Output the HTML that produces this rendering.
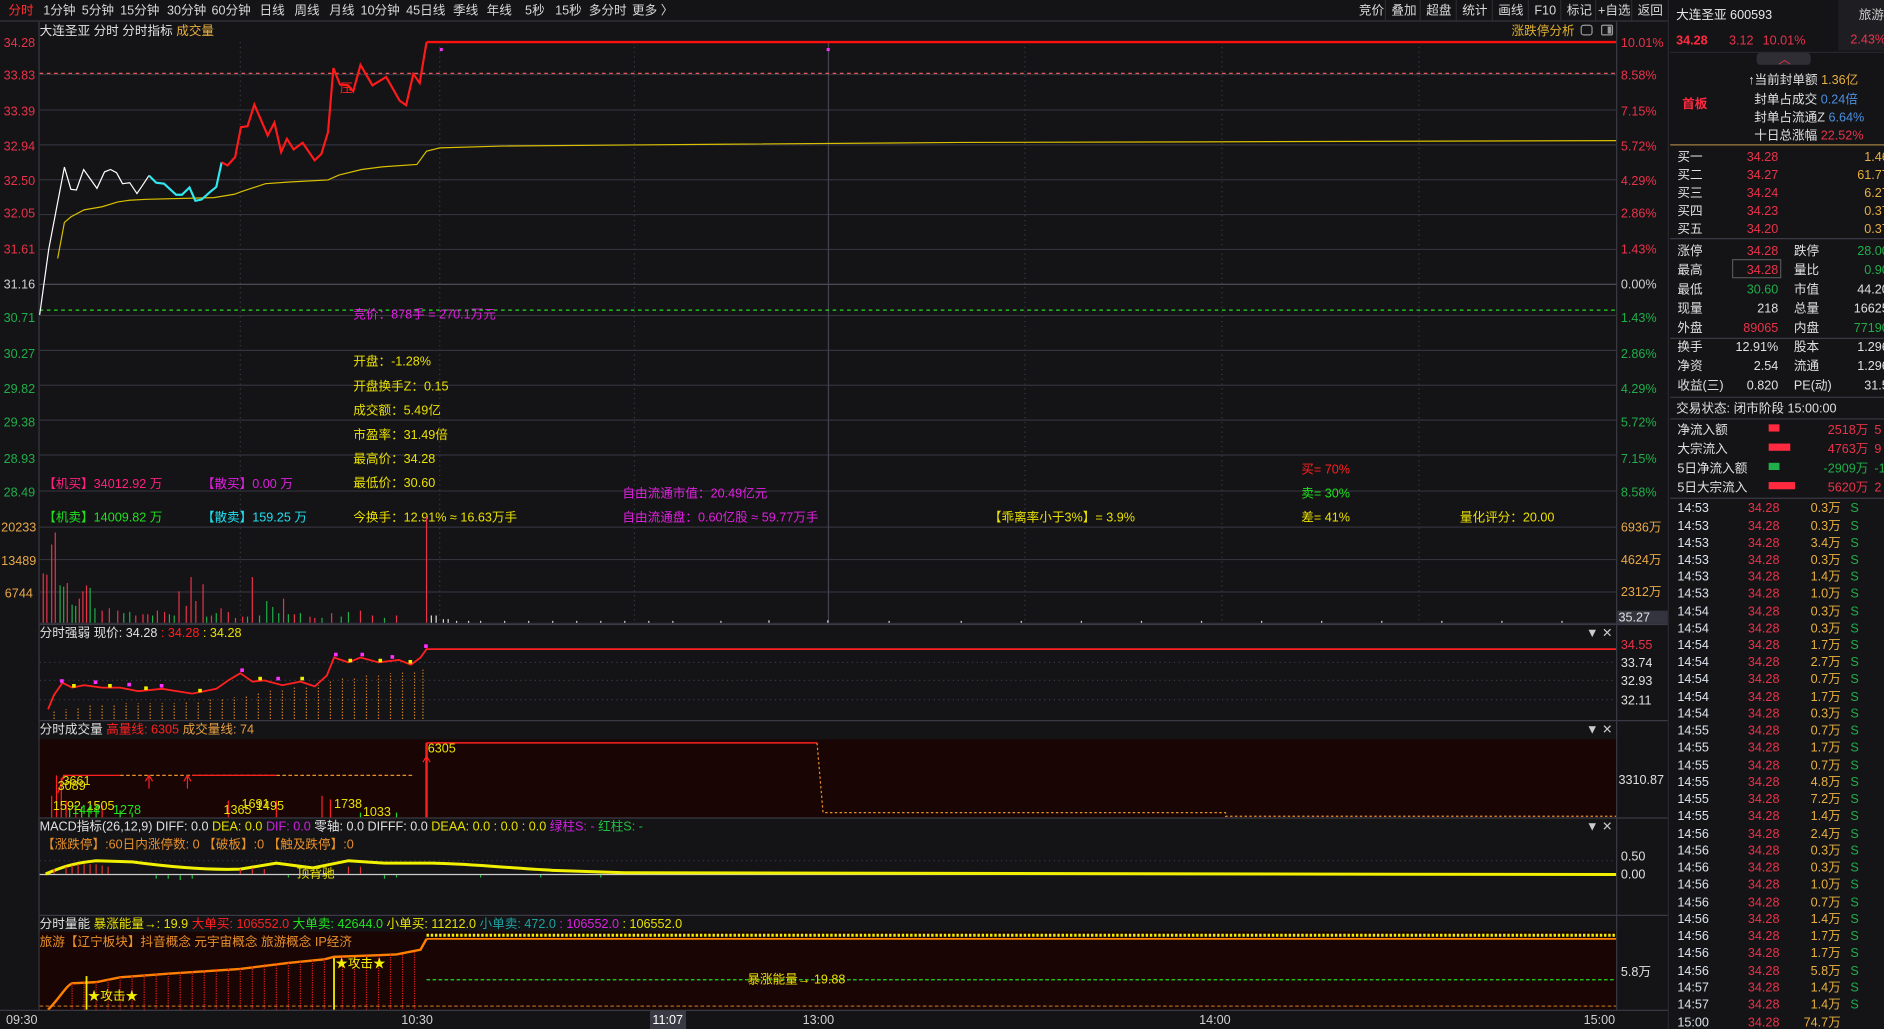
<!DOCTYPE html>
<html><head><meta charset="utf-8"><style>
html,body{margin:0;padding:0;background:#141316;overflow:hidden}
svg{display:block}
text{font-family:"Liberation Sans","Noto Sans CJK SC",sans-serif;font-size:10.5px}
</style></head><body>
<svg width="1884" height="1029" viewBox="0 0 1568 856" preserveAspectRatio="none" xmlns="http://www.w3.org/2000/svg">
<rect width="1568" height="856" fill="#141316"/>
<!-- toolbar -->
<line x1="0" y1="17.5" x2="1388" y2="17.5" stroke="#34343c"/>
<g fill="#d8d8d8">
<text x="7" y="12" fill="#ff3030">分时</text><text x="36" y="12">1分钟</text><text x="68" y="12">5分钟</text><text x="100" y="12">15分钟</text><text x="139" y="12">30分钟</text><text x="176" y="12">60分钟</text><text x="216" y="12">日线</text><text x="245" y="12">周线</text><text x="274" y="12">月线</text><text x="300" y="12">10分钟</text><text x="338" y="12">45日线</text><text x="377" y="12">季线</text><text x="405" y="12">年线</text><text x="437" y="12">5秒</text><text x="462" y="12">15秒</text><text x="490" y="12">多分时</text><text x="526" y="12">更多 〉</text>
<text x="1131" y="12">竞价</text><text x="1158" y="12">叠加</text><text x="1187" y="12">超盘</text><text x="1217" y="12">统计</text><text x="1247" y="12">画线</text><text x="1277" y="12">F10</text><text x="1304" y="12">标记</text><text x="1330" y="12">+自选</text><text x="1363" y="12">返回</text>
</g>
<g stroke="#2a2a30"><line x1="1153" y1="0" x2="1153" y2="17"/><line x1="1182" y1="0" x2="1182" y2="17"/><line x1="1212" y1="0" x2="1212" y2="17"/><line x1="1242" y1="0" x2="1242" y2="17"/><line x1="1272" y1="0" x2="1272" y2="17"/><line x1="1299" y1="0" x2="1299" y2="17"/><line x1="1328" y1="0" x2="1328" y2="17"/><line x1="1358" y1="0" x2="1358" y2="17"/></g>
<!-- chart frame -->
<line x1="32.5" y1="18" x2="32.5" y2="840" stroke="#3a3a44"/>
<line x1="1345.5" y1="18" x2="1345.5" y2="840" stroke="#3a3a44"/>
<line x1="1388.5" y1="0" x2="1388.5" y2="856" stroke="#2a2a30"/>
<text x="33" y="29" fill="#e0e0e0">大连圣亚  分时 分时指标 <tspan fill="#e8b040">成交量</tspan></text>
<text x="1258" y="29" fill="#e0b030">涨跌停分析</text>
<rect x="1316" y="21" width="9" height="8" rx="2" fill="none" stroke="#999"/><rect x="1333" y="21" width="9" height="8" rx="1" fill="none" stroke="#999"/><rect x="1338" y="22" width="3" height="6" fill="#999"/>
<!-- grid -->
<g stroke="#33333c" stroke-width="1">
<line x1="33" y1="62" x2="1345" y2="62"/><line x1="33" y1="91.5" x2="1345" y2="91.5"/><line x1="33" y1="120.5" x2="1345" y2="120.5"/><line x1="33" y1="149.5" x2="1345" y2="149.5"/><line x1="33" y1="178.5" x2="1345" y2="178.5"/><line x1="33" y1="207.5" x2="1345" y2="207.5"/><line x1="33" y1="236.5" x2="1345" y2="236.5" stroke="#55555e"/><line x1="33" y1="262.5" x2="1345" y2="262.5"/><line x1="33" y1="291.5" x2="1345" y2="291.5"/><line x1="33" y1="320.5" x2="1345" y2="320.5"/><line x1="33" y1="349.5" x2="1345" y2="349.5"/><line x1="33" y1="378.5" x2="1345" y2="378.5"/><line x1="33" y1="408.5" x2="1345" y2="408.5"/><line x1="33" y1="438.5" x2="1345" y2="438.5"/><line x1="33" y1="465.5" x2="1345" y2="465.5"/><line x1="33" y1="492.5" x2="1345" y2="492.5"/><line x1="33" y1="518.5" x2="1345" y2="518.5"/>
</g>
<g stroke="#3a3a44" stroke-dasharray="1,3"><line x1="200" y1="35" x2="200" y2="518"/><line x1="366" y1="35" x2="366" y2="518"/><line x1="528" y1="35" x2="528" y2="518"/><line x1="853" y1="35" x2="853" y2="518"/><line x1="1017" y1="35" x2="1017" y2="518"/><line x1="1181" y1="35" x2="1181" y2="518"/></g>
<line x1="689.5" y1="35" x2="689.5" y2="518" stroke="#444450"/>
<line x1="33" y1="61" x2="1345" y2="61" stroke="#ff6060" stroke-dasharray="3,3"/>
<line x1="33" y1="258" x2="1345" y2="258" stroke="#20e020" stroke-dasharray="3,3"/>
<!-- left labels -->
<g fill="#e8334a" font-size="10"><text x="3" y="39">34.28</text><text x="3" y="66">33.83</text><text x="3" y="96">33.39</text><text x="3" y="125">32.94</text><text x="3" y="154">32.50</text><text x="3" y="181">32.05</text><text x="3" y="211">31.61</text></g>
<text x="3" y="240" fill="#d0d0d0">31.16</text>
<g fill="#1fae4a"><text x="3" y="268">30.71</text><text x="3" y="298">30.27</text><text x="3" y="327">29.82</text><text x="3" y="355">29.38</text><text x="3" y="385">28.93</text><text x="3" y="413">28.49</text></g>
<g fill="#e8a848"><text x="1" y="442">20233</text><text x="1" y="470">13489</text><text x="4" y="497">6744</text></g>
<!-- right labels -->
<g fill="#e8334a"><text x="1349" y="39">10.01%</text><text x="1349" y="66">8.58%</text><text x="1349" y="96">7.15%</text><text x="1349" y="125">5.72%</text><text x="1349" y="154">4.29%</text><text x="1349" y="181">2.86%</text><text x="1349" y="211">1.43%</text></g>
<text x="1349" y="240" fill="#d0d0d0">0.00%</text>
<g fill="#1fae4a"><text x="1349" y="268">1.43%</text><text x="1349" y="298">2.86%</text><text x="1349" y="327">4.29%</text><text x="1349" y="355">5.72%</text><text x="1349" y="385">7.15%</text><text x="1349" y="413">8.58%</text></g>
<g fill="#e8a848"><text x="1349" y="442">6936万</text><text x="1349" y="469">4624万</text><text x="1349" y="496">2312万</text></g>
<rect x="1346" y="508" width="42" height="11" fill="#34343e"/><text x="1347" y="517" fill="#e0e0e0">35.27</text>
<!-- avg line -->
<polyline fill="none" stroke="#d8c000" stroke-width="1" points="48,215 53.6,185 59,180.4 70,174.6 85,172 98,168 107.5,166.6 122,165.8 178,164.4 195,161.6 202,159 221,152.8 241,151.4 273,149.7 282,145.6 301,141 319,138.7 347,136.8 355,125.7 366,123 418,121.5 600,120 800,118.5 1000,118 1345,117"/>
<!-- price line -->
<polyline fill="none" stroke="#ffffff" stroke-width="1" points="33,262 40.6,207 53.6,139 59,157.5 63.6,158 69.6,141 80.7,156.7 87,143 92,141 97,143.7 102,152.8 108,152 114,161 119.4,153 124,146"/>
<polyline fill="none" stroke="#30e8f0" stroke-width="1.8" points="124,146 130,152 136.5,152.8 146.6,162 151.4,162 157.7,156 162.6,167 167.8,166 174.5,160 180,155.5 184.5,135"/>
<polyline fill="none" stroke="#ff1a1a" stroke-width="1.8" points="184.5,135 189.4,137.6 195.7,130.7 200.5,105.8 206,105 211.7,87 222.8,112.7 228.4,102 234,126.5 238.8,115.5 244.4,124.3 251.9,118.8 261.9,133.4 267.5,128 273,110 277.5,56.6 283,70.4 289.8,71 294,76 300,54 310,71 321.4,64 332.6,83.7 338,87.5 344,61.5 349.3,69 355,35"/>
<line x1="355" y1="35" x2="1345" y2="35" stroke="#ff1010" stroke-width="2"/>
<text x="283" y="77" fill="#ff2020" font-size="9">压</text>
<rect x="366" y="40" width="2.5" height="2.5" fill="#ff30ff"/><rect x="688" y="40" width="2.5" height="2.5" fill="#ff30ff"/>
<!-- annotations -->
<text x="294" y="265" fill="#e020e0">竞价：878手 = 270.1万元</text>
<g fill="#e8e000"><text x="294" y="304">开盘：-1.28%</text><text x="294" y="325">开盘换手Z：0.15</text><text x="294" y="345">成交额：5.49亿</text><text x="294" y="365">市盈率：31.49倍</text><text x="294" y="385">最高价：34.28</text><text x="294" y="405">最低价：30.60</text><text x="294" y="434">今换手：12.91% ≈ 16.63万手</text>
<text x="823" y="434">【乖离率小于3%】= 3.9%</text><text x="1083" y="434">差= 41%</text><text x="1215" y="434">量化评分：20.00</text></g>
<text x="36" y="406" fill="#ff2080">【机买】34012.92 万</text><text x="168" y="406" fill="#e020e0">【散买】0.00 万</text>
<text x="36" y="434" fill="#20e020">【机卖】14009.82 万</text><text x="168" y="434" fill="#20e0f0">【散卖】159.25 万</text>
<text x="518" y="414" fill="#e020e0">自由流通市值：20.49亿元</text><text x="518" y="434" fill="#e020e0">自由流通盘：0.60亿股 ≈ 59.77万手</text>
<text x="1083" y="394" fill="#ff2020">买= 70%</text><text x="1083" y="414" fill="#20e020">卖= 30%</text>
<!-- volume bars -->
<path fill="none" stroke="#e8334a" stroke-width="1" d="M36,518v-41M39,518v-40M43,518v-65M46,518v-75M56,518v-33M66,518v-20M69,518v-26M72,518v-31M85,518v-10M91,518v-12M98,518v-10M113,518v-6M119,518v-7M123,518v-7M131,518v-10M137,518v-9M149,518v-26M155,518v-14M159,518v-38M163,518v-18M169,518v-32M176,518v-6M184,518v-12M190,518v-9M196,518v-4M202,518v-5M210,518v-38M236,518v-20M245,518v-7M258,518v-5M262,518v-4M276,518v-8M300,518v-10M310,518v-6M330,518v-6M355,518v-88"/>
<path fill="none" stroke="#1fae4a" stroke-width="1" d="M50,518v-31M53,518v-30M60,518v-15M63,518v-14M75,518v-29M79,518v-12M103,518v-8M108,518v-9M127,518v-6M141,518v-7M145,518v-6M172,518v-5M180,518v-8M206,518v-5M216,518v-6M222,518v-18M227,518v-13M232,518v-8M240,518v-7M250,518v-8M268,518v-4M284,518v-5M290,518v-9M320,518v-4"/>
<path fill="none" stroke="#ddd" stroke-width="1" d="M359,518v-6M363,518v-6M369,518v-3M373,518v-3M380,518v-1.5M390,518v-1.5M400,518v-1.5M420,518v-1.5M440,518v-1.5M460,518v-1.5M480,518v-1.5M500,518v-1.5M520,518v-1.5M540,518v-1.5M560,518v-1.5M600,518v-1.5M640,518v-2M689,518v-2M740,518v-1.5M800,518v-1.5M850,518v-1.5M900,518v-1.5M950,518v-1.5M1000,518v-1.5M1050,518v-1.5M1100,518v-1.5M1150,518v-1.5M1200,518v-1.5M1250,518v-1.5M1300,518v-1.5"/>
<!-- panel 2 -->
<line x1="33" y1="519.5" x2="1388" y2="519.5" stroke="#3a3a44"/>
<text x="33" y="530" fill="#e0e0e0">分时强弱  现价: 34.28 <tspan fill="#ff2020">: 34.28</tspan><tspan fill="#e8e000"> : 34.28</tspan></text>
<text x="1320" y="530" fill="#ccc" font-size="8">▼  ✕</text>
<g stroke="#3a3a44" stroke-dasharray="1,3"><line x1="33" y1="551" x2="1345" y2="551"/><line x1="33" y1="566" x2="1345" y2="566"/><line x1="33" y1="582" x2="1345" y2="582"/></g>
<g fill="#e8334a" font-size="9.5"><text x="1349" y="540">34.55</text></g><g fill="#e0e0e0" font-size="9.5"><text x="1349" y="555">33.74</text><text x="1349" y="570">32.93</text><text x="1349" y="586">32.11</text></g>
<g stroke="#e8902a" stroke-dasharray="1,1.5" stroke-width="1">
<path d="M45,598v-6M55,598v-8M65,598v-10M75,598v-11M85,598v-12M95,598v-12M105,598v-13M115,598v-13M125,598v-13M135,598v-13M145,598v-13M155,598v-14M165,598v-15M175,598v-16M185,598v-17M195,598v-18M205,598v-20M215,598v-22M225,598v-24M235,598v-25M245,598v-26M255,598v-27M265,598v-28M275,598v-32M285,598v-34M295,598v-35M305,598v-36M315,598v-37M325,598v-38M335,598v-39M345,598v-40M352,598v-41"/></g>
<polyline fill="none" stroke="#ff2020" stroke-width="1.5" points="40,590 45,578 52,568 60,572 70,570 85,572 100,572 115,575 135,573 160,577 180,573 190,566 200,560 210,567 220,566 235,570 250,567 262,571 272,562 278,547 290,551 300,547 315,551 332,549 342,553 350,547 355,540 1345,540"/>
<g fill="#ff30ff"><rect x="50" y="565" width="3" height="3"/><rect x="78" y="566" width="3" height="3"/><rect x="106" y="568" width="3" height="3"/><rect x="133" y="569" width="3" height="3"/><rect x="200" y="556" width="3" height="3"/><rect x="230" y="563" width="3" height="3"/><rect x="278" y="543" width="3" height="3"/><rect x="300" y="543" width="3" height="3"/><rect x="325" y="545" width="3" height="3"/><rect x="353" y="536" width="3" height="3"/></g>
<g fill="#f0f000"><rect x="60" y="569" width="3" height="3"/><rect x="90" y="569" width="3" height="3"/><rect x="120" y="571" width="3" height="3"/><rect x="165" y="573" width="3" height="3"/><rect x="215" y="563" width="3" height="3"/><rect x="250" y="563" width="3" height="3"/><rect x="290" y="548" width="3" height="3"/><rect x="315" y="548" width="3" height="3"/><rect x="340" y="549" width="3" height="3"/></g>
<!-- panel 3 -->
<line x1="33" y1="599.5" x2="1388" y2="599.5" stroke="#3a3a44"/>
<text x="33" y="610" fill="#e0e0e0">分时成交量 <tspan fill="#ff2020">高量线: 6305</tspan> <tspan fill="#e8a040">成交量线: 74</tspan></text>
<text x="1320" y="610" fill="#ccc" font-size="8">▼  ✕</text>
<rect x="33" y="615" width="1312" height="65" fill="#1a0505"/>
<line x1="355" y1="618" x2="680" y2="618" stroke="#ff2020" stroke-width="1.2"/>
<polyline fill="none" stroke="#e8902a" stroke-dasharray="2,2" points="680,618 685,676 1020,676 1020,679 1345,679"/>
<polyline fill="none" stroke="#ff2020" points="48,660 53,645 100,645"/><line x1="100" y1="645" x2="345" y2="645" stroke="#e8902a" stroke-dasharray="3,2"/><line x1="160" y1="645" x2="230" y2="645" stroke="#ff2020"/>
<path d="M355,680V618" stroke="#ff2020" stroke-width="2"/>
<path d="M124,656v-10M121,650l3,-5 3,5M156,656v-10M153,650l3,-5 3,5M355,640v-10M352,634l3,-5 3,5" stroke="#ff2020" fill="none"/>
<path d="M43,680v-18M47,680v-35M51,680v-33M55,680v-14M63,680v-10M85,680v-10M190,680v-14M230,680v-14M268,680v-18M275,680v-15" stroke="#ff2020"/>
<path d="M58,680v-8M68,680v-9M74,680v-8M80,680v-10M100,680v-6M110,680v-4M300,680v-4M330,680v-4" stroke="#20e020"/>
<g fill="#e8e000" font-size="10"><text x="52" y="653">3661</text><text x="48" y="657">3089</text><text x="44" y="674">1592</text><text x="72" y="674">1505</text><text x="186" y="677">1365</text><text x="201" y="672">1691</text><text x="213" y="674">1495</text><text x="278" y="672">1738</text><text x="302" y="679">1033</text><text x="356" y="626">6305</text></g>
<g fill="#20e020" font-size="10"><text x="60" y="677">1444</text><text x="94" y="677">1278</text></g>
<text x="1347" y="652" fill="#e0e0e0" font-size="9.5">3310.87</text>
<!-- panel 4 -->
<line x1="33" y1="680.5" x2="1388" y2="680.5" stroke="#3a3a44"/>
<text x="33" y="691" fill="#e0e0e0">MACD指标(26,12,9) DIFF: 0.0 <tspan fill="#e8e000">DEA: 0.0</tspan> <tspan fill="#d020e0">DIF: 0.0</tspan> 零轴: 0.0 DIFFF: 0.0 <tspan fill="#e8e000">DEAA: 0.0 : 0.0 : 0.0</tspan> <tspan fill="#d020e0">绿柱S: -</tspan> <tspan fill="#20c040">红柱S: -</tspan></text>
<text x="1320" y="691" fill="#ccc" font-size="8">▼  ✕</text>
<text x="35" y="706" fill="#e8902a">【涨跌停】:60日内涨停数: 0 【破板】:0 【触及跌停】:0</text>
<line x1="33" y1="716" x2="1345" y2="716" stroke="#3a3a44" stroke-dasharray="1,3"/>
<line x1="33" y1="727.5" x2="1345" y2="727.5" stroke="#cccccc"/>
<path d="M38,727 C50,722 60,718 80,716 L110,717 C140,721 170,724 200,723 L230,718 L260,722 L290,716 L320,718 L360,718 C400,719 420,722 460,724 L520,726 L1000,727 L1345,727.5" fill="none" stroke="#f0f000" stroke-width="2.5"/>
<path d="M45,727v-4M55,727v-6M60,727v-7M65,727v-8M70,727v-8M75,727v-8M80,727v-8M85,727v-7M90,727v-6M200,727v-4M210,727v-5M220,727v-4M290,727v-6M300,727v-6" stroke="#e03030"/>
<path d="M130,728v3M140,728v3M150,728v4M160,728v3M240,728v2M320,728v3M330,728v2M400,728v2M450,728v2M500,728v2" stroke="#20c040"/>
<text x="247" y="730" fill="#e8e000" font-size="9.5">顶背驰</text>
<text x="1349" y="716" fill="#e0e0e0" font-size="9.5">0.50</text><text x="1349" y="731" fill="#e0e0e0" font-size="9.5">0.00</text>
<!-- panel 5 -->
<line x1="33" y1="761.5" x2="1388" y2="761.5" stroke="#3a3a44"/>
<text x="33" y="772" fill="#e0e0e0">分时量能 <tspan fill="#e8e000">暴涨能量→: 19.9</tspan> <tspan fill="#ff2020">大单买: 106552.0</tspan> <tspan fill="#20e020">大单卖: 42644.0</tspan> <tspan fill="#e8e000">小单买: 11212.0</tspan> <tspan fill="#20a0a0">小单卖: 472.0</tspan> <tspan fill="#e020e0">: 106552.0</tspan><tspan fill="#e8e000"> : 106552.0</tspan></text>
<rect x="33" y="775" width="1312" height="65" fill="#1a0505"/>
<text x="33" y="787" fill="#e8902a">旅游【辽宁板块】抖音概念 元宇宙概念 旅游概念 IP经济</text>
<line x1="355" y1="778" x2="1345" y2="778" stroke="#f0f000" stroke-width="2.5" stroke-dasharray="2,1.5"/>
<line x1="355" y1="781" x2="1345" y2="781" stroke="#ff8000" stroke-width="1.5"/>
<path d="M40,840 C50,830 55,820 60,818 L80,817 L100,813 L140,810 L200,806 L240,801 L270,798 L278,796 L330,794 L350,790 L355,781" fill="none" stroke="#ff8000" stroke-width="2"/>
<path d="M60,818v22M70,817v23M80,817v23M90,815v25M100,813v27M110,812v28M120,811v29M130,810v30M140,810v30M150,809v31M160,808v32M170,807v33M180,806v34M190,806v34M200,806v34M210,804v36M220,802v38M230,801v39M240,801v39M250,800v40M260,799v41M270,798v42M285,796v44M295,796v44M305,795v45M315,795v45M325,794v46M335,794v46M345,792v48" stroke="#e02020" stroke-dasharray="1,1"/>
<line x1="355" y1="815" x2="1345" y2="815" stroke="#20e020" stroke-dasharray="3,2"/>
<line x1="33" y1="837" x2="1345" y2="837" stroke="#e8902a" stroke-dasharray="3,2" opacity="0.7"/>
<line x1="72" y1="812" x2="72" y2="840" stroke="#f0f000" stroke-width="1.5"/>
<line x1="278" y1="797" x2="278" y2="840" stroke="#f0f000" stroke-width="1.5"/>
<text x="73" y="832" fill="#f0f000">★攻击★</text><text x="279" y="805" fill="#f0f000">★攻击★</text>
<text x="622" y="818" fill="#e8e000">暴涨能量→ 19.88</text>
<text x="1349" y="812" fill="#e0e0e0" font-size="9.5">5.8万</text>
<!-- time axis -->
<line x1="0" y1="840.5" x2="1388" y2="840.5" stroke="#3a3a44"/>
<g fill="#d0d0d0"><text x="5" y="852">09:30</text><text x="334" y="852">10:30</text><text x="668" y="852">13:00</text><text x="998" y="852">14:00</text><text x="1318" y="852">15:00</text></g>
<rect x="541" y="841" width="30" height="15" fill="#3a3a44"/><text x="543" y="852" fill="#fff">11:07</text>
<!-- right panel -->
<rect x="1389" y="0" width="179" height="856" fill="#141316"/>
<text x="1395" y="16" fill="#e8e8e8" font-size="13">大连圣亚 600593</text>
<rect x="1530" y="0" width="38" height="42" fill="#1e1e22"/>
<text x="1547" y="16" fill="#ccc">旅游</text><text x="1540" y="36" fill="#e8334a">2.43%</text>
<text x="1395" y="37" fill="#ff2a40" font-size="14" font-weight="bold">34.28</text>
<text x="1439" y="37" fill="#e8334a" font-size="11.5">3.12</text><text x="1467" y="37" fill="#e8334a" font-size="11.5">10.01%</text>
<line x1="1390" y1="43.5" x2="1568" y2="43.5" stroke="#2a2a30"/>
<rect x="1462" y="44" width="45" height="10" rx="3" fill="#2e2e34"/><text x="1480" y="53" fill="#e8334a" font-size="8">︿</text>
<text x="1400" y="90" fill="#ff2a40" font-size="12" font-weight="bold">首板</text>
<g font-size="11.5">
<text x="1455" y="70" fill="#e0e0e0">↑当前封单额 <tspan fill="#e8b040">1.36亿</tspan></text>
<text x="1460" y="86" fill="#e0e0e0">封单占成交 <tspan fill="#4a90e0">0.24倍</tspan></text>
<text x="1460" y="101" fill="#e0e0e0">封单占流通Z <tspan fill="#4a90e0">6.64%</tspan></text>
<text x="1460" y="116" fill="#e0e0e0">十日总涨幅 <tspan fill="#e8334a">22.52%</tspan></text>
</g>
<line x1="1390" y1="120.5" x2="1568" y2="120.5" stroke="#a08040"/>
<g font-size="12">
<g fill="#e0e0e0"><text x="1396" y="134">买一</text><text x="1396" y="149">买二</text><text x="1396" y="164">买三</text><text x="1396" y="179">买四</text><text x="1396" y="194">买五</text></g>
<g fill="#e8334a" text-anchor="end"><text x="1480" y="134">34.28</text><text x="1480" y="149">34.27</text><text x="1480" y="164">34.24</text><text x="1480" y="179">34.23</text><text x="1480" y="194">34.20</text></g>
<g fill="#e8b040" text-anchor="end"><text x="1572" y="134">1.46</text><text x="1572" y="149">61.77</text><text x="1572" y="164">6.27</text><text x="1572" y="179">0.37</text><text x="1572" y="194">0.37</text></g>
</g>
<line x1="1390" y1="198.5" x2="1568" y2="198.5" stroke="#3a3a44"/>
<g font-size="12">
<g fill="#e0e0e0"><text x="1396" y="212">涨停</text><text x="1396" y="228">最高</text><text x="1396" y="244">最低</text><text x="1396" y="260">现量</text><text x="1396" y="276">外盘</text>
<text x="1493" y="212">跌停</text><text x="1493" y="228">量比</text><text x="1493" y="244">市值</text><text x="1493" y="260">总量</text><text x="1493" y="276">内盘</text>
<text x="1480" y="260" text-anchor="end">218</text><text x="1572" y="244" text-anchor="end">44.20</text><text x="1572" y="260" text-anchor="end">16625</text></g>
<rect x="1442" y="216" width="40" height="15" fill="none" stroke="#555"/>
<g text-anchor="end"><text x="1480" y="212" fill="#e8334a">34.28</text><text x="1480" y="228" fill="#e8334a">34.28</text><text x="1480" y="244" fill="#1fae4a">30.60</text><text x="1480" y="276" fill="#e8334a">89065</text></g>
<g fill="#1fae4a" text-anchor="end"><text x="1572" y="212">28.00</text><text x="1572" y="228">0.90</text><text x="1572" y="276">77190</text></g>
</g>
<line x1="1390" y1="281.5" x2="1568" y2="281.5" stroke="#3a3a44"/>
<g fill="#e0e0e0" font-size="12"><text x="1396" y="292">换手</text><text x="1396" y="308">净资</text><text x="1396" y="324">收益(三)</text><text x="1493" y="292">股本</text><text x="1493" y="308">流通</text><text x="1493" y="324">PE(动)</text>
<text x="1480" y="292" text-anchor="end">12.91%</text><text x="1480" y="308" text-anchor="end">2.54</text><text x="1480" y="324" text-anchor="end">0.820</text>
<text x="1572" y="292" text-anchor="end">1.296</text><text x="1572" y="308" text-anchor="end">1.296</text><text x="1572" y="324" text-anchor="end">31.5</text></g>
<line x1="1390" y1="330.5" x2="1568" y2="330.5" stroke="#3a3a44"/>
<text x="1395" y="343" fill="#e0e0e0" font-size="12">交易状态: 闭市阶段 15:00:00</text>
<line x1="1390" y1="348.5" x2="1568" y2="348.5" stroke="#3a3a44"/>
<g fill="#e0e0e0" font-size="12"><text x="1396" y="361">净流入额</text><text x="1396" y="377">大宗流入</text><text x="1396" y="393">5日净流入额</text><text x="1396" y="409">5日大宗流入</text></g>
<rect x="1472" y="353" width="9" height="6" fill="#ff2a40"/><rect x="1472" y="369" width="18" height="6" fill="#ff2a40"/><rect x="1472" y="385" width="9" height="6" fill="#1fae4a"/><rect x="1472" y="401" width="22" height="6" fill="#ff2a40"/>
<g font-size="12" text-anchor="end"><text x="1555" y="361" fill="#e8334a">2518万</text><text x="1555" y="377" fill="#e8334a">4763万</text><text x="1555" y="393" fill="#1fae4a">-2909万</text><text x="1555" y="409" fill="#e8334a">5620万</text></g>
<g font-size="12"><text x="1560" y="361" fill="#e8334a">5</text><text x="1560" y="377" fill="#e8334a">9</text><text x="1560" y="393" fill="#1fae4a">-1</text><text x="1560" y="409" fill="#e8334a">2</text></g>
<line x1="1390" y1="414.5" x2="1568" y2="414.5" stroke="#3a3a44"/>
<g font-size="12">
<g fill="#dde4ee"><text x="1396" y="426">14:53</text><text x="1396" y="441">14:53</text><text x="1396" y="455">14:53</text><text x="1396" y="469">14:53</text><text x="1396" y="483">14:53</text><text x="1396" y="497">14:53</text><text x="1396" y="512">14:54</text><text x="1396" y="526">14:54</text><text x="1396" y="540">14:54</text><text x="1396" y="554">14:54</text><text x="1396" y="568">14:54</text><text x="1396" y="583">14:54</text><text x="1396" y="597">14:54</text><text x="1396" y="611">14:55</text><text x="1396" y="625">14:55</text><text x="1396" y="640">14:55</text><text x="1396" y="654">14:55</text><text x="1396" y="668">14:55</text><text x="1396" y="682">14:55</text><text x="1396" y="697">14:56</text><text x="1396" y="711">14:56</text><text x="1396" y="725">14:56</text><text x="1396" y="739">14:56</text><text x="1396" y="754">14:56</text><text x="1396" y="768">14:56</text><text x="1396" y="782">14:56</text><text x="1396" y="796">14:56</text><text x="1396" y="811">14:56</text><text x="1396" y="825">14:57</text><text x="1396" y="839">14:57</text><text x="1396" y="854">15:00</text></g>
<g fill="#e8334a" text-anchor="end"><text x="1481" y="426">34.28</text><text x="1481" y="441">34.28</text><text x="1481" y="455">34.28</text><text x="1481" y="469">34.28</text><text x="1481" y="483">34.28</text><text x="1481" y="497">34.28</text><text x="1481" y="512">34.28</text><text x="1481" y="526">34.28</text><text x="1481" y="540">34.28</text><text x="1481" y="554">34.28</text><text x="1481" y="568">34.28</text><text x="1481" y="583">34.28</text><text x="1481" y="597">34.28</text><text x="1481" y="611">34.28</text><text x="1481" y="625">34.28</text><text x="1481" y="640">34.28</text><text x="1481" y="654">34.28</text><text x="1481" y="668">34.28</text><text x="1481" y="682">34.28</text><text x="1481" y="697">34.28</text><text x="1481" y="711">34.28</text><text x="1481" y="725">34.28</text><text x="1481" y="739">34.28</text><text x="1481" y="754">34.28</text><text x="1481" y="768">34.28</text><text x="1481" y="782">34.28</text><text x="1481" y="796">34.28</text><text x="1481" y="811">34.28</text><text x="1481" y="825">34.28</text><text x="1481" y="839">34.28</text><text x="1481" y="854">34.28</text></g>
<g fill="#e8b040" text-anchor="end"><text x="1532" y="426">0.3万</text><text x="1532" y="441">0.3万</text><text x="1532" y="455">3.4万</text><text x="1532" y="469">0.3万</text><text x="1532" y="483">1.4万</text><text x="1532" y="497">1.0万</text><text x="1532" y="512">0.3万</text><text x="1532" y="526">0.3万</text><text x="1532" y="540">1.7万</text><text x="1532" y="554">2.7万</text><text x="1532" y="568">0.7万</text><text x="1532" y="583">1.7万</text><text x="1532" y="597">0.3万</text><text x="1532" y="611">0.7万</text><text x="1532" y="625">1.7万</text><text x="1532" y="640">0.7万</text><text x="1532" y="654">4.8万</text><text x="1532" y="668">7.2万</text><text x="1532" y="682">1.4万</text><text x="1532" y="697">2.4万</text><text x="1532" y="711">0.3万</text><text x="1532" y="725">0.3万</text><text x="1532" y="739">1.0万</text><text x="1532" y="754">0.7万</text><text x="1532" y="768">1.4万</text><text x="1532" y="782">1.7万</text><text x="1532" y="796">1.7万</text><text x="1532" y="811">5.8万</text><text x="1532" y="825">1.4万</text><text x="1532" y="839">1.4万</text><text x="1532" y="854">74.7万</text></g>
<g fill="#1fae4a"><text x="1540" y="426">S</text><text x="1540" y="441">S</text><text x="1540" y="455">S</text><text x="1540" y="469">S</text><text x="1540" y="483">S</text><text x="1540" y="497">S</text><text x="1540" y="512">S</text><text x="1540" y="526">S</text><text x="1540" y="540">S</text><text x="1540" y="554">S</text><text x="1540" y="568">S</text><text x="1540" y="583">S</text><text x="1540" y="597">S</text><text x="1540" y="611">S</text><text x="1540" y="625">S</text><text x="1540" y="640">S</text><text x="1540" y="654">S</text><text x="1540" y="668">S</text><text x="1540" y="682">S</text><text x="1540" y="697">S</text><text x="1540" y="711">S</text><text x="1540" y="725">S</text><text x="1540" y="739">S</text><text x="1540" y="754">S</text><text x="1540" y="768">S</text><text x="1540" y="782">S</text><text x="1540" y="796">S</text><text x="1540" y="811">S</text><text x="1540" y="825">S</text><text x="1540" y="839">S</text></g>
</g>
</svg>
</body></html>
